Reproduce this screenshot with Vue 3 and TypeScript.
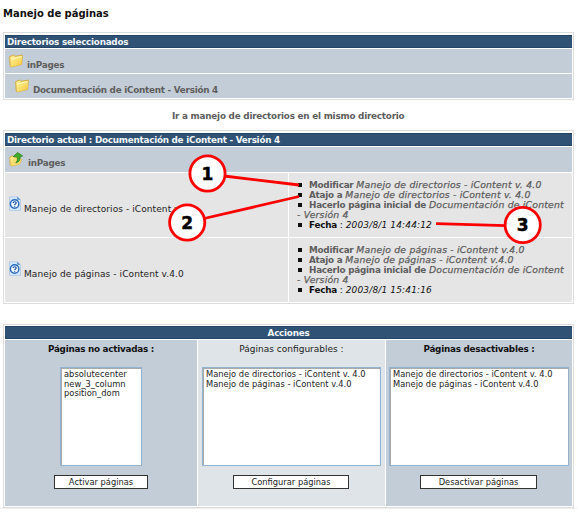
<script setup lang="ts">
interface PageEntry {
  label: string
  name: string
  date: string
}

interface ActionColumn {
  title: string
  strong: boolean
  tone: string
  size: string
  options: string[]
  button: string
}

const directory = 'Documentación de iContent - Versión 4'

const pages: PageEntry[] = [
  {
    label: 'Manejo de directorios - iContent v. 4',
    name: 'Manejo de directorios - iContent v. 4.0',
    date: '2003/8/1 14:44:12',
  },
  {
    label: 'Manejo de páginas - iContent v.4.0',
    name: 'Manejo de páginas - iContent v.4.0',
    date: '2003/8/1 15:41:16',
  },
]

const pageNames = pages.map((p) => p.name)

const actions: ActionColumn[] = [
  {
    title: 'Páginas no activadas :',
    strong: true,
    tone: 'blue',
    size: 'small',
    options: ['absolutecenter', 'new_3_column', 'position_dom'],
    button: 'Activar páginas',
  },
  {
    title: 'Páginas configurables :',
    strong: false,
    tone: 'pale',
    size: 'middle',
    options: pageNames,
    button: 'Configurar páginas',
  },
  {
    title: 'Páginas desactivables :',
    strong: true,
    tone: 'blue',
    size: 'large',
    options: pageNames,
    button: 'Desactivar páginas',
  },
]
</script>

<template>
  <main class="page">
    <svg class="defs" width="0" height="0">
      <defs>
        <linearGradient id="paper" x1="0" y1="0" x2="1" y2="1">
          <stop offset="0" stop-color="#fff39a" />
          <stop offset="1" stop-color="#f2c63a" />
        </linearGradient>
        <symbol id="folder" viewBox="0 0 14 14">
          <path d="M.6 2.6 4.7 1 6 2.3 13.3 1 12.6 10.4 2.4 13 1.2 11.8Z" fill="url(#paper)" stroke="#cfa02c" stroke-width=".8" />
          <path d="M2.3 5 13.2 2.4 12.6 10.4 2.4 13Z" fill="url(#paper)" />
          <path d="M2.3 5 12.7 2.6" stroke="#fffbd0" stroke-width=".9" />
        </symbol>
        <symbol id="folder-up" viewBox="0 0 15 15">
          <path d="M.8 5 4 3.8 5.3 5 9.5 4.2 9.6 7 12.8 7.5 10.5 12.2 2.4 14 1.2 12.8Z" fill="url(#paper)" stroke="#d0a43a" stroke-width=".8" />
          <path d="M4.2 8 12.8 6.8 10.6 12.2 2.5 14Z" fill="#f6dc70" />
          <path d="M4.2 4.6 8.6.6 13.8 4 11.2 4.5C11.5 8 10.2 10 6.8 11 8.6 8.8 8.8 7 7.8 5.1Z" fill="#43ad28" stroke="#257d1c" stroke-width=".7" />
        </symbol>
        <symbol id="help-page" viewBox="0 0 12 15">
          <path d="M.5.8H8.2L11.5 3.8V14.4H.5Z" fill="#d5e8fa" stroke="#a9c8e7" stroke-width=".8" />
          <path d="M8.2.8V3.8H11.5Z" fill="#4e8ad0" />
          <circle cx="5.6" cy="8" r="4.2" fill="#f4faff" stroke="#2867bd" stroke-width="1.4" />
          <path d="M4.1 7C4.2 5.3 7.2 5.3 7.2 7 7.2 8 5.7 8 5.7 9.1M5.7 9.7V10.8" fill="none" stroke="#174da5" stroke-width="1.2" />
        </symbol>
      </defs>
    </svg>

    <h1>Manejo de páginas</h1>

    <section class="panel selected">
      <h2 class="bar">Directorios seleccionados</h2>
      <div class="dir"><svg class="folder"><use href="#folder" /></svg><a>inPages</a></div>
      <div class="dir nested"><svg class="folder"><use href="#folder" /></svg><a>{{ directory }}</a></div>
    </section>

    <a class="jump">Ir a manejo de directorios en el mismo directorio</a>

    <section class="panel current">
      <h2 class="bar">Directorio actual : {{ directory }}</h2>
      <div class="dir up"><svg class="folder-up"><use href="#folder-up" /></svg><a>inPages</a></div>
      <div v-for="p in pages" :key="p.name" class="entry">
        <div class="cell name"><svg class="help"><use href="#help-page" /></svg><span>{{ p.label }}</span></div>
        <ul class="cell links">
          <li><b>Modificar</b> <i>{{ p.name }}</i></li>
          <li><b>Atajo a</b> <i>{{ p.name }}</i></li>
          <li><b>Hacerlo página inicial de</b> <i>Documentación de iContent<br />- Versión 4</i></li>
          <li class="date"><b>Fecha</b> : <i>{{ p.date }}</i></li>
        </ul>
      </div>
    </section>

    <section class="panel actions">
      <h2 class="bar center">Acciones</h2>
      <div class="columns">
        <div v-for="a in actions" :key="a.title" class="column" :class="[a.tone, a.size]">
          <div class="label" :class="{ strong: a.strong }">{{ a.title }}</div>
          <div class="listbox">
            <div v-for="o in a.options" :key="o">{{ o }}</div>
          </div>
          <button type="button">{{ a.button }}</button>
        </div>
      </div>
    </section>
    <div class="rule"></div>

    <svg class="callouts" width="580" height="522" viewBox="0 0 580 522">
      <g stroke="#f00" stroke-width="2.8" fill="#fff">
        <path d="M224 176 299 185M204 218.500 299 196.500M436 223.700 506 225.700" />
        <circle cx="207.500" cy="173.500" r="17.600" />
        <circle cx="187.200" cy="222.500" r="17.600" />
        <circle cx="522.700" cy="225" r="17.600" />
      </g>
      <g class="digits">
        <text x="207.500" y="179.500">1</text>
        <text x="187.200" y="228.500">2</text>
        <text x="522.700" y="231">3</text>
      </g>
    </svg>
  </main>
</template>

<style>
body {
  background: #fff;
}
</style>

<style scoped>
.page {
  position: relative;
  box-sizing: border-box;
  width: 580px;
  height: 522px;
  overflow: hidden;
  padding: 7px 0 0 3px;
  font: 9px/10px 'DejaVu Sans', Verdana, sans-serif;
  color: #222;
}
.defs {
  display: block;
}
h1 {
  margin: 0;
  height: 25px;
  font-size: 10px;
  line-height: 14px;
  letter-spacing: -0.02px;
  color: #111;
}
.panel {
  box-sizing: border-box;
  width: 571px;
  display: flex;
  flex-direction: column;
  gap: 1px;
  padding: 2px 1px 1px;
  border: 1px solid #dcdcdc;
  white-space: nowrap;
}
.selected {
  height: 68px;
}
.bar {
  box-sizing: border-box;
  flex: none;
  height: 13px;
  margin: 0;
  padding-left: 2px;
  background: #305274;
  border-top: 1px solid #244568;
  border-bottom: 1px solid #244568;
  color: #f4f8fb;
  font-size: 8.8px;
  line-height: 12px;
  letter-spacing: -0.24px;
}
.bar.center {
  padding: 0;
  text-align: center;
}
.dir {
  flex: none;
  display: flex;
  box-sizing: border-box;
  height: 24px;
  padding: 5px 0 0 4px;
  background: #c3cdd7;
  color: #5d5d5d;
  font-weight: bold;
  font-size: 8.8px;
  letter-spacing: -0.24px;
}
.dir a {
  margin: 6px 0 0 4px;
}
.dir.nested {
  padding-left: 10px;
}
.folder {
  width: 14px;
  height: 14px;
}
.folder-up {
  width: 15px;
  height: 15px;
}
.help {
  width: 12px;
  height: 15px;
  margin-bottom: 3px;
}
.jump {
  display: block;
  height: 30px;
  padding-left: 169px;
  line-height: 32px;
  font-size: 8.8px;
  letter-spacing: -0.21px;
  font-weight: bold;
  color: #5d5d5d;
}
.current {
  height: 174px;
}
.dir.up {
  height: 25px;
}
.entry {
  flex: 1;
  display: grid;
  grid-template-columns: 283px 283px;
  gap: 1px;
}
.cell {
  background: #e5e5e5;
}
.name {
  display: flex;
  align-items: center;
  padding-left: 4px;
}
.name span {
  margin: 7px 0 0 3px;
  letter-spacing: 0.09px;
}
.links {
  box-sizing: border-box;
  margin: 0;
  padding: 7px 0 0 8px;
  list-style: none;
  color: #5d5d5d;
}
.links li::before {
  content: '';
  display: inline-block;
  width: 4px;
  height: 4px;
  margin: 0 7px 1px 1px;
  background: #111;
}
.links b {
  font-size: 8.8px;
  letter-spacing: -0.22px;
}
.links i {
  font-size: 9.3px;
  letter-spacing: 0.19px;
  color: #5d5d5d;
  -webkit-text-stroke: 0.25px #5d5d5d;
}
.links .date,
.links .date i {
  color: #111;
}
.links .date i {
  font-size: 9px;
  letter-spacing: 0.15px;
  -webkit-text-stroke: 0;
}
.actions {
  height: 184px;
  margin-top: 20px;
  padding-top: 1px;
}
.columns {
  flex: 1;
  display: grid;
  grid-template-columns: 192px 187px 186px;
  gap: 1px;
}
.column {
  display: flex;
  flex-direction: column;
  align-items: center;
}
.blue {
  background: #c3cdd7;
}
.pale {
  background: #dfe4e8;
}
.label {
  margin: 4px 0 13px;
}
.label.strong {
  font-weight: bold;
  font-size: 8.8px;
  letter-spacing: -0.24px;
  color: #111;
}
.listbox {
  box-sizing: border-box;
  height: 99px;
  padding: 2px 0 0 3px;
  border: 1px solid #93b2cf;
  box-shadow: inset 1px 1px #aaa;
  background: #fff;
  font-size: 8.3px;
  line-height: 9.5px;
  letter-spacing: 0.03px;
}
.small .listbox {
  width: 82px;
}
.middle .listbox {
  width: 179px;
}
.large .listbox {
  width: 180px;
}
button {
  box-sizing: border-box;
  height: 14px;
  margin: 9px 0 0;
  padding: 0;
  border: 1px solid #333;
  border-radius: 0;
  background: #fff;
  font: 8.3px/12px 'DejaVu Sans', Verdana, sans-serif;
  color: #222;
}
.small button {
  width: 94px;
}
.middle button {
  width: 116px;
  margin-right: 1px;
}
.large button {
  width: 117px;
  margin-right: 1px;
}
.rule {
  width: 577px;
  margin-left: -3px;
  height: 1px;
  background: #eee;
}
.callouts {
  position: absolute;
  top: 0;
  left: 0;
}
.digits {
  font: bold 17px 'DejaVu Sans', sans-serif;
  text-anchor: middle;
  fill: #000;
  stroke: #000;
  stroke-width: 0.5px;
}
</style>
